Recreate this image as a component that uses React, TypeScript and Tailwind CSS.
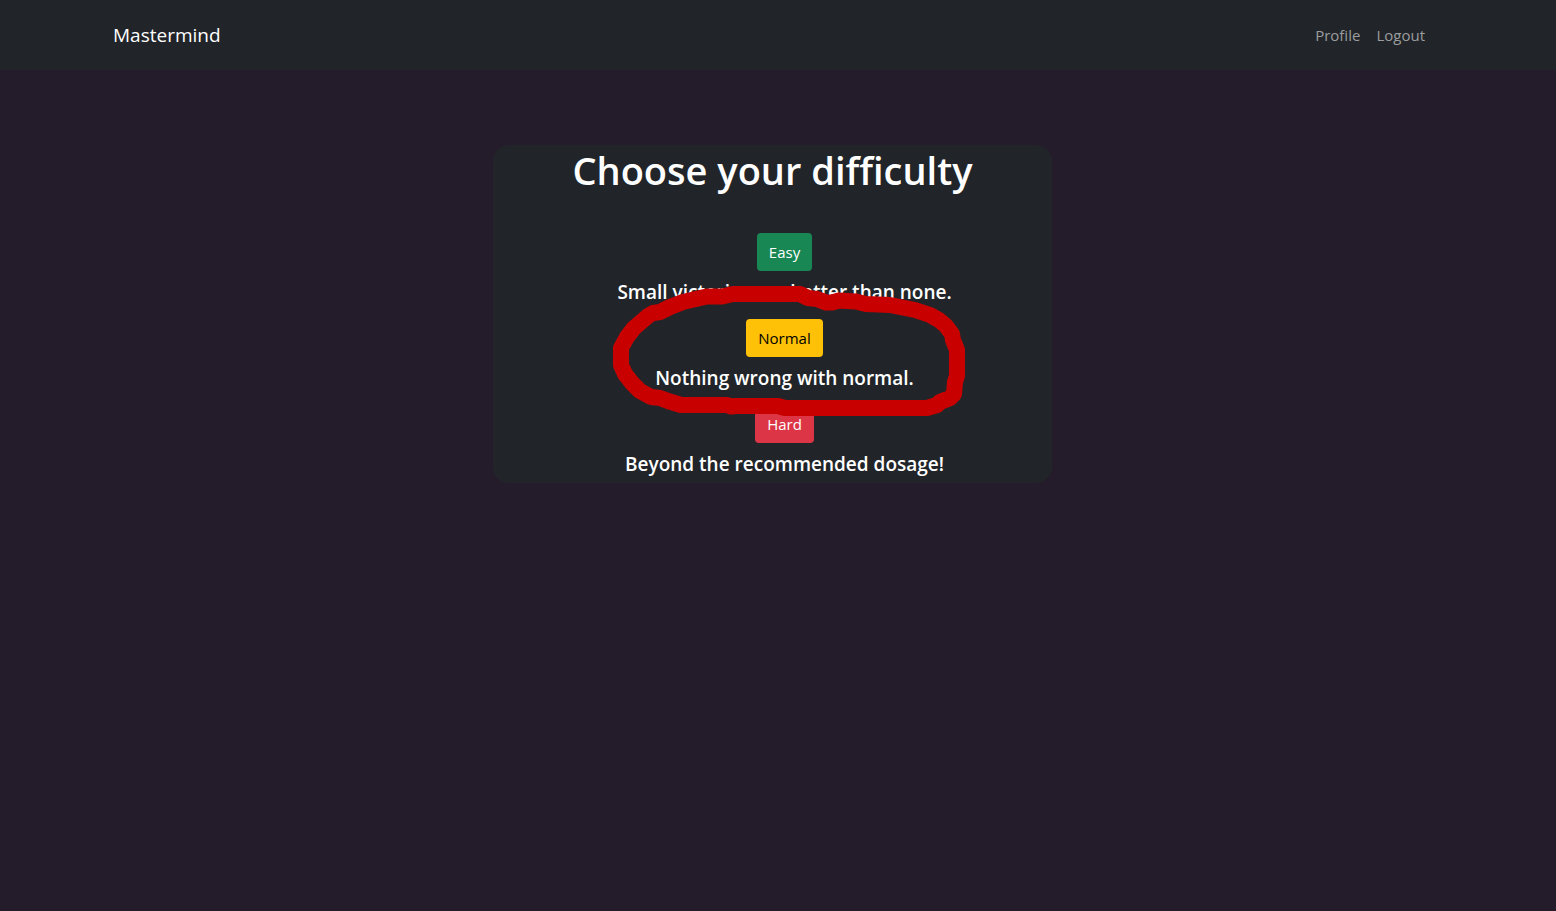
const levels = [
  { name: "Easy", note: "Small victories are better than none.", style: "bg-[#198754] text-white" },
  { name: "Normal", note: "Nothing wrong with normal.", style: "bg-[#ffc107] text-black" },
  { name: "Hard", note: "Beyond the recommended dosage!", style: "bg-[#dc3545] text-white" },
];

function NavBar() {
  return (
    <header className="bg-[#212529] py-[15px] pr-[10px]">
      <nav className="mx-auto flex h-10 max-w-[1320px] items-center justify-between">
        <a href="#home" className="text-[19px] leading-[30px] text-white">
          Mastermind
        </a>
        <div className="flex gap-4 pr-2 text-[15px] leading-6 text-[#9b9d9f]">
          <a href="#profile">Profile</a>
          <a href="#logout">Logout</a>
        </div>
      </nav>
    </header>
  );
}

function Highlight() {
  return (
    <svg
      aria-hidden="true"
      className="pointer-events-none absolute -top-[34px] left-1/2 -ml-[173px] h-[132px] w-[354px]"
      viewBox="612 285 354 132"
      fill="none"
      stroke="#c80000"
      strokeWidth="16"
      strokeLinecap="round"
      strokeLinejoin="round"
    >
      <path d="M733 294 L800 294 L808 298 L817 299 L826 302.500 L832 302.500 L839 300.500 L856 301.500 L866 304 L890 305 L900 307 L915 310 L930 315 L939 320 L946 326 L952 334 L953 340 L957 350 L957 376 L955 382 L954 394 L950 398 L940 402 L937 405 L927 408 L785 408 L778 406 L736 406 L731 406.500 L727 405 L681 405 L668 401 L660 398 L651 397 L640 391 L632 383 L625 374 L621 365 L621 348 L627 337 L634 328 L641 322 L648 316 L653 313 L660 312 L670 307 L683 302 L700 298 L707 296.500 L722 296.500 Z" />
    </svg>
  );
}

export default function App() {
  return (
    <div className="min-h-screen bg-[#251c2b] font-['Open_Sans','Noto_Sans',sans-serif]">
      <NavBar />
      <main className="px-4 pt-[75px] pr-[27px]">
        <section className="mx-auto max-w-[559px] rounded-2xl bg-[#212529] text-center text-white">
          <h1 className="text-[38px] leading-[50px] font-semibold">Choose your difficulty</h1>
          <ul className="mt-[38px] flex flex-col gap-[14px] pb-1.5 pl-6">
            {levels.map((level) => (
              <li key={level.name} className="relative flex flex-col items-center gap-2">
                <button
                  type="button"
                  className={`h-[38px] rounded px-3 text-[15px] leading-6 ${level.style}`}
                >
                  {level.name}
                </button>
                <p className="text-[19px] leading-[26px] font-semibold">{level.note}</p>
                {level.name === "Normal" && (
                  <div className="absolute inset-x-0 top-0 z-10 h-0">
                    <Highlight />
                  </div>
                )}
              </li>
            ))}
          </ul>
        </section>
      </main>
    </div>
  );
}
